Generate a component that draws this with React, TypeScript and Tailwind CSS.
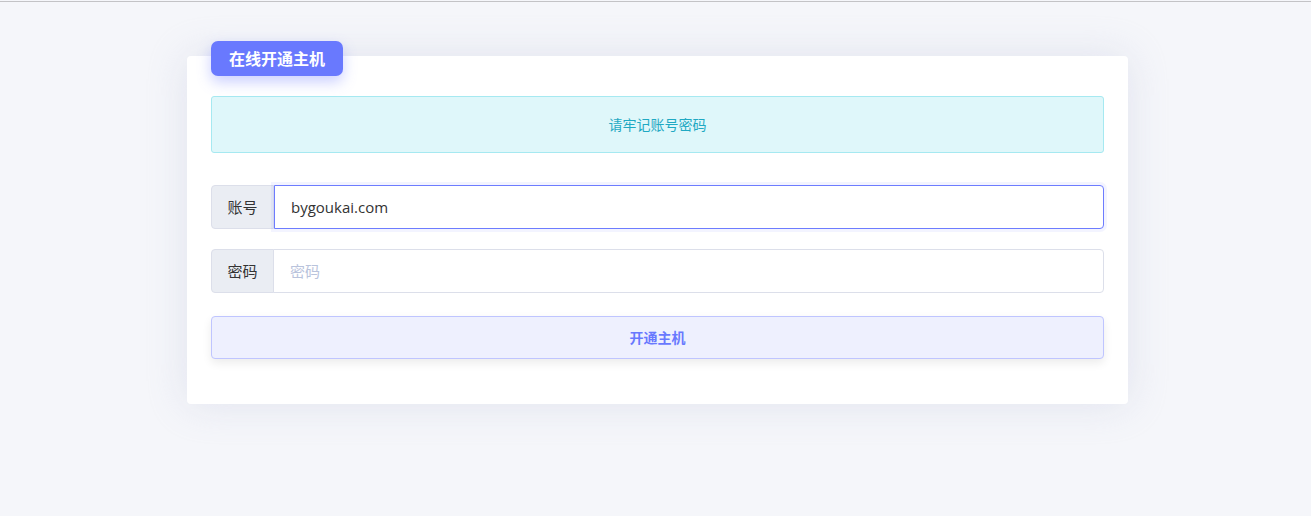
import { useState } from "react";

export default function App() {
  const [account, setAccount] = useState("bygoukai.com");
  const [password, setPassword] = useState("");

  return (
    <div
      className="min-h-[516px] bg-[#f5f6fa] border-t border-t-[#f5f6fa]"
      style={{ fontFamily: '"Open Sans", "Noto Sans CJK SC", sans-serif' }}
    >
      <div className="h-px bg-[#c3c3c6]" />
      <div className="flex justify-center pt-[54px] pl-[4px]">
        <div className="relative w-[941px] bg-white rounded-[4px] shadow-[0_0_40px_rgba(200,204,224,0.45)] px-6 pt-10 pb-[45px]">
          <div className="absolute -top-[15px] left-6 h-[35px] w-[132px] flex items-center justify-center rounded-[7px] bg-[#6979fe] text-white text-[16px] font-bold shadow-[0_6px_14px_rgba(105,121,254,0.35)]">
            在线开通主机
          </div>

          <div className="h-[57px] flex items-center justify-center rounded-[3px] border border-[#a6e9f1] bg-[#dff7fa] text-[14px] text-[#1fa9c3]">
            请牢记账号密码
          </div>

          <div className="mt-8 flex h-[44px]">
            <div className="w-[63px] flex items-center justify-center rounded-l-[4px] border border-[#dcdfea] bg-[#eaedf3] text-[15px] text-[#333]">
              账号
            </div>
            <input
              value={account}
              onChange={(e) => setAccount(e.target.value)}
              autoFocus
              className="flex-1 rounded-r-[4px] border border-[#6d7cff] bg-white px-4 text-[15px] text-[#333] outline-none shadow-[0_0_0_3px_rgba(105,121,254,0.08)]"
            />
          </div>

          <div className="mt-5 flex h-[44px]">
            <div className="w-[63px] flex items-center justify-center rounded-l-[4px] border border-[#dcdfea] bg-[#eaedf3] text-[15px] text-[#333]">
              密码
            </div>
            <input
              value={password}
              onChange={(e) => setPassword(e.target.value)}
              placeholder="密码"
              className="flex-1 -ml-px rounded-r-[4px] border border-[#dcdfea] bg-white px-4 text-[15px] text-[#333] outline-none placeholder:text-[#b9c3dc]"
            />
          </div>

          <button className="mt-[23px] w-full h-[43px] rounded-[4px] border border-[#bfc5ff] bg-[#eef0fe] text-[14px] font-bold text-[#6979fe] shadow-[0_4px_10px_rgba(0,0,0,0.08)]">
            开通主机
          </button>
        </div>
      </div>
    </div>
  );
}
